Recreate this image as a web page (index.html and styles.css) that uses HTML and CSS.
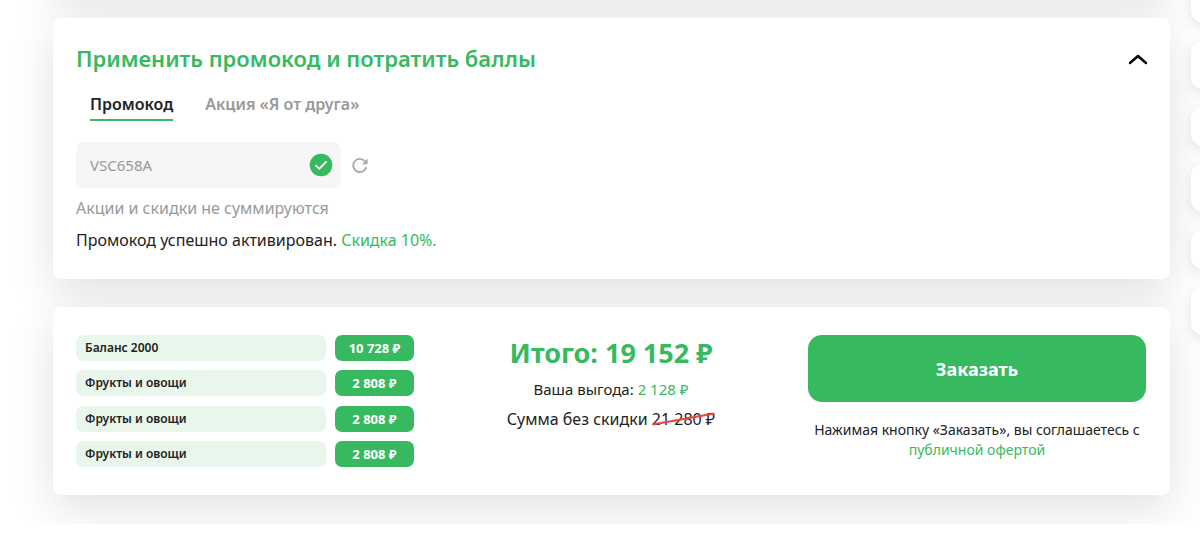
FILE: index.html
```
<!DOCTYPE html>
<html lang="ru">
<head>
    <meta charset="UTF-8">
    <meta name="viewport" content="width=device-width, initial-scale=1.0">
    <title>Оформление заказа</title>
    <link rel="stylesheet" href="styles.css">
</head>
<body>

    <div class="checkout">
        <main class="checkout-main">
            <section class="card card-prev"></section>

            <section class="card promo">
                <div class="promo-header">
                    <h2>Применить промокод и потратить баллы</h2>
                    <button type="button" class="collapse-button" aria-label="Свернуть">
                        <svg width="20" height="16" viewBox="0 0 20 16" fill="none" stroke="#000" stroke-width="2.5" stroke-linecap="round" stroke-linejoin="round">
                            <path d="M2 13 10 6l8 7"/>
                        </svg>
                    </button>
                </div>

                <div class="tabs">
                    <button type="button" class="tab active">Промокод</button>
                    <button type="button" class="tab">Акция «Я от друга»</button>
                </div>

                <div class="promo-row">
                    <div class="promo-field">
                        <input type="text" id="promocode" name="promocode" value="VSC658A" aria-label="Промокод">
                        <svg width="24" height="24" viewBox="0 0 24 24" fill="none">
                            <circle cx="12" cy="12" r="11.3" fill="#37ba5f"/>
                            <path d="M6.5 12.2 10.3 15.8 17.6 8.4" stroke="#fff" stroke-width="1.8"/>
                        </svg>
                    </div>
                    <button type="button" class="reset-button" aria-label="Сбросить промокод">
                        <svg width="16" height="16" viewBox="0 0 16 16" fill="none">
                            <path d="M14 10.8A6.6 6.6 0 1 1 12.8 4.1" stroke="#ababab" stroke-width="1.9" stroke-linecap="round"/>
                            <path d="M15.6 1.6v5.6H10Z" fill="#ababab"/>
                        </svg>
                    </button>
                </div>

                <p class="promo-note">Акции и скидки не суммируются</p>
                <p class="promo-result">Промокод успешно активирован. <span class="green">Скидка 10%.</span></p>
            </section>

            <section class="card summary">
                <ul class="items">
                    <li><span class="item-name">Баланс 2000</span><span class="item-price">10 728 ₽</span></li>
                    <li><span class="item-name">Фрукты и овощи</span><span class="item-price">2 808 ₽</span></li>
                    <li><span class="item-name">Фрукты и овощи</span><span class="item-price">2 808 ₽</span></li>
                    <li><span class="item-name">Фрукты и овощи</span><span class="item-price">2 808 ₽</span></li>
                </ul>

                <div class="total">
                    <p class="total-sum">Итого: 19 152 ₽</p>
                    <p class="total-benefit">Ваша выгода: <span class="green">2 128 ₽</span></p>
                    <p class="total-full">Сумма без скидки <span class="old-price">21 280 ₽</span></p>
                </div>

                <div class="order">
                    <button type="submit" class="order-button">Заказать</button>
                    <p class="order-note">Нажимая кнопку «Заказать», вы соглашаетесь с <a href="#">публичной офертой</a></p>
                </div>
            </section>
        </main>

        <aside class="side">
            <div class="side-item"></div>
            <div class="side-item tall"></div>
            <div class="side-item"></div>
            <div class="side-item tall"></div>
            <div class="side-item"></div>
            <div class="side-item tall"></div>
        </aside>
    </div>

</body>
</html>
```

FILE: styles.css
```
/* --- General Setup --- */
:root {
    --green: #37ba5f;
    --light-green: #e8f6ec;
    --text-color: #222;
    --gray: #999;
}

* {
    box-sizing: border-box;
}

body {
    margin: 0;
    background: #fff;
    color: var(--text-color);
    font-family: 'Noto Sans', 'Open Sans', sans-serif;
    font-size: 16px;
}

h2, p, ul {
    margin: 0;
    padding: 0;
}

button {
    padding: 0;
    border: none;
    background: none;
    font-family: inherit;
    cursor: pointer;
}

svg {
    display: block;
}

.green {
    color: var(--green);
}

/* --- Page Layout --- */
.checkout {
    display: flex;
    gap: 21px;
    padding: 0 0 29px 53px;
    overflow: hidden;
}

.checkout-main {
    flex: 1;
    display: flex;
    flex-direction: column;
    gap: 28px;
    margin-top: -70px;
}

.card {
    background: #fff;
    border-radius: 8px;
    box-shadow: 0 14px 46px rgba(0, 0, 0, 0.12);
}

.card-prev {
    height: 60px;
}

/* --- Promo Code --- */
.promo {
    padding: 24px 22px 27px 23px;
}

.promo-header {
    display: flex;
    justify-content: space-between;
    align-items: center;
}

h2 {
    color: var(--green);
    font-size: 22px;
    font-weight: 600;
    line-height: 32px;
}

.tabs {
    display: flex;
    gap: 32px;
    margin: 20px 0 21px;
    padding-left: 14px;
}

.tab {
    padding-bottom: 5px;
    border-bottom: 2px solid transparent;
    color: var(--gray);
    font-size: 16px;
    font-weight: 600;
    line-height: 20px;
}

.tab.active {
    border-color: var(--green);
    color: var(--text-color);
}

.promo-row {
    display: flex;
    align-items: center;
    gap: 11px;
}

.promo-field {
    display: flex;
    align-items: center;
    width: 265px;
    height: 46px;
    padding: 0 8px 0 14px;
    border-radius: 8px;
    background: #f6f6f6;
}

.promo-field input {
    flex: 1;
    min-width: 0;
    padding: 0;
    border: none;
    outline: none;
    background: none;
    color: var(--gray);
    font-family: inherit;
    font-size: 15px;
}

.promo-note {
    margin-top: 8px;
    color: var(--gray);
    line-height: 24px;
}

.promo-result {
    margin-top: 8px;
    line-height: 24px;
}

/* --- Order Summary --- */
.summary {
    display: flex;
    justify-content: space-between;
    padding: 28px 24px 28px 23px;
}

.items {
    display: flex;
    flex-direction: column;
    justify-content: space-between;
    gap: 9px;
    width: 338px;
    min-height: 132px;
    list-style: none;
}

.items li {
    display: flex;
    gap: 9px;
    font-size: 12px;
    font-weight: 600;
    line-height: 26px;
}

.item-name {
    flex: 1;
    padding-left: 9px;
    border-radius: 7px;
    background: var(--light-green);
}

.item-price {
    width: 79px;
    border-radius: 7px;
    background: var(--green);
    color: #fff;
    font-size: 13px;
    font-weight: 700;
    text-align: center;
}

.total {
    text-align: center;
}

.total-sum {
    color: var(--green);
    font-size: 27px;
    font-weight: 700;
    line-height: 36px;
}

.total-benefit {
    margin-top: 6px;
    font-size: 15px;
    line-height: 24px;
}

.total-full {
    margin-top: 6px;
    line-height: 24px;
}

.old-price {
    position: relative;
}

/* slanted red strike */
.old-price::after {
    content: "";
    position: absolute;
    top: 10px;
    left: 0;
    width: 100%;
    height: 2px;
    background: #f04438;
    transform: rotate(-10deg);
}

.order {
    width: 338px;
    text-align: center;
}

.order-button {
    width: 100%;
    height: 67px;
    border-radius: 14px;
    background: var(--green);
    color: #fff;
    font-size: 18px;
    font-weight: 700;
}

.order-note {
    margin-top: 18px;
    font-size: 14px;
    line-height: 20px;
}

.order-note a {
    color: var(--green);
    text-decoration: none;
}

/* --- Side Menu --- */
.side {
    display: flex;
    flex-direction: column;
    gap: 18px;
    width: 9px;
    margin-top: -16px;
}

.side-item {
    width: 60px;
    height: 39px;
    border-radius: 12px;
    background: #fff;
    box-shadow: 0 4px 12px rgba(0, 0, 0, 0.1);
}

.side-item.tall {
    height: 48px;
}
```
